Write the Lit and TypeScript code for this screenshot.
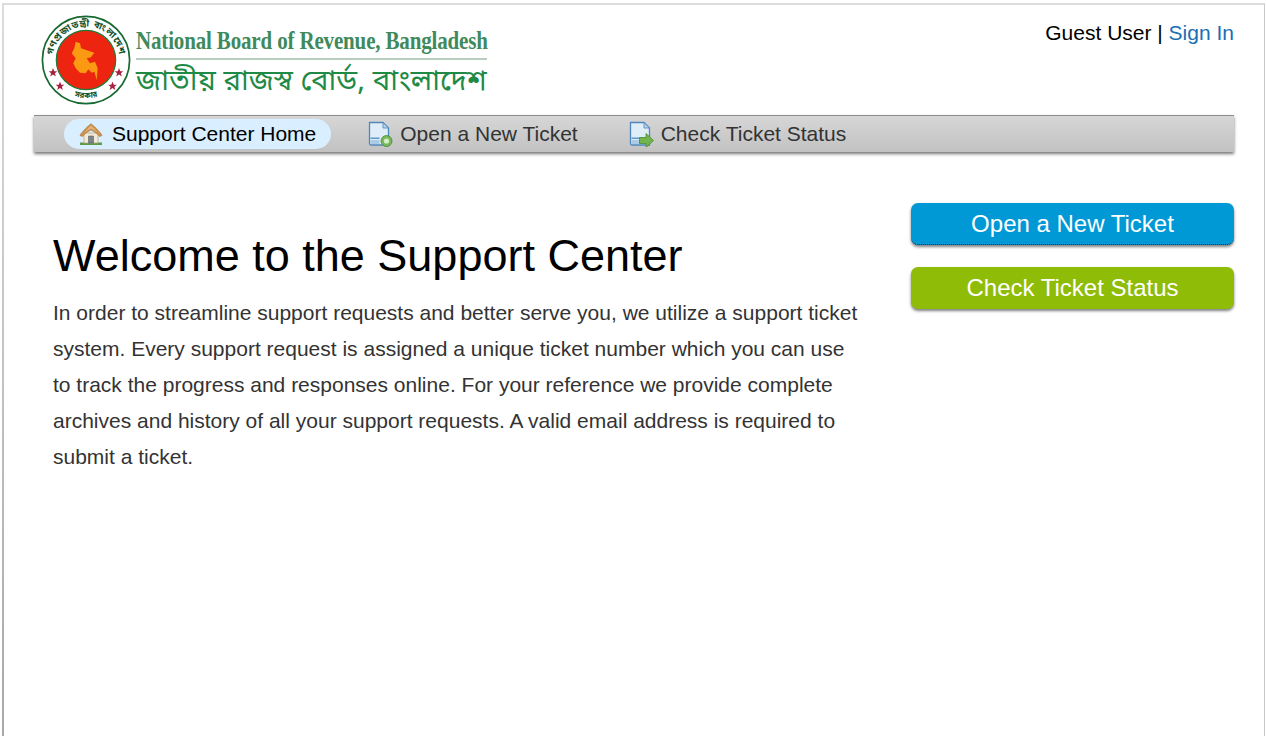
import { LitElement, html, css, svg } from "lit";
import { customElement } from "lit/decorators.js";

const star = (x: number, y: number) =>
  svg`<path transform="translate(${x} ${y})" d="M0-4.400 1.200-1.300 4.300-1.300 1.900.7 2.800 3.900 0 2.100-2.800 3.900-1.900.7-4.300-1.300-1.200-1.300z"/>`;

const seal = svg`<svg class="seal" viewBox="0 0 92 92" width="92" height="92" aria-hidden="true">
  <defs>
    <path id="ringTop" d="M14.700 58 A33.500 33.500 0 1 1 77.300 58"/>
    <path id="ringBottom" d="M18 72 A38.500 38.500 0 0 0 74 72"/>
  </defs>
  <circle cx="46" cy="46" r="43.600" fill="#fff" stroke="#16692f" stroke-width="1.700"/>
  <circle cx="46" cy="46" r="29.700" fill="#ec2410" stroke="#1f7a3a" stroke-width="1.200"/>
  <text class="ring" fill="#14522a"><textPath href="#ringTop" startOffset="50%" text-anchor="middle">গণপ্রজাতন্ত্রী বাংলাদেশ</textPath></text>
  <text class="ring low" fill="#14522a"><textPath href="#ringBottom" startOffset="50%" text-anchor="middle">সরকার</textPath></text>
  <path fill="#fb9a12" d="M35.700 27.700L40 29.300L41 34.300L48.300 36.700L54.300 38.700L51 43.300L46.700 44.300L50 49.300L55 47.700L57.700 54.300L56.700 66L54.300 57.700L51.700 58.700L48.300 55.300L45.700 59.300L40 58.700L35.700 54.300L33.300 49.300L35.700 44.300L31.700 39.300L34.300 34.300z"/>
  <g fill="#a8203f">${star(13, 58.5)}${star(20, 72)}${star(79, 58.5)}${star(72.5, 72)}</g>
</svg>`;

const homeIcon = svg`<svg viewBox="0 0 24 22" width="24" height="22" aria-hidden="true">
  <path d="M1 19.500h22V22H1z" fill="#5f9a4c"/>
  <path d="M5 10h14v10H5z" fill="#f2ead8" stroke="#b5a27e" stroke-width=".7"/>
  <path d="M9.500 13h5v7h-5z" fill="#7d8489" stroke="#5d6367" stroke-width=".6"/>
  <path d="M12 .8C9.800 2.300 3 8.500 1 12.500l2.500 1C6 10.500 9.500 8 12 7c2.500 1 6 3.500 8.500 6.500l2.500-1C21 8.500 14.200 2.300 12 .8z" fill="#cf9350" stroke="#a56f35" stroke-width=".6"/>
  <path d="M12 2.800C10 4.500 7.500 7 6 9c2-1.500 4-2.800 6-3.500 2 .7 4 2 6 3.500-1.500-2-4-4.500-6-6.200z" fill="#e6b87c"/>
</svg>`;

const docIcon = (badge: unknown) => svg`<svg viewBox="0 0 25 26" width="25" height="26" aria-hidden="true">
  <path d="M1.500 1.500h13.500l5.500 5.500v17h-17.500a1.500 1.500 0 0 1-1.500-1.500z" fill="#dfedf9" stroke="#4f86bb" stroke-width="1.300"/>
  <path d="M15 1.500v5.500h5.500z" fill="#b9d3ea" stroke="#4f86bb" stroke-width=".8"/>
  <path d="M2.500 16.500h9v1.500h-9z" fill="#5f97cb"/>
  <path d="M2.500 19h9v4h-9z" fill="#a9cbe8"/>
  ${badge}
</svg>`;
const plusBadge = svg`<circle cx="18.500" cy="20" r="5.500" fill="#79b95c" stroke="#3f8a35" stroke-width=".8"/><circle cx="18.500" cy="20" r="2.600" fill="#d5eec5"/>`;
const arrowBadge = svg`<path d="M10.500 16.500h6.500V12.500l7.500 7-7.500 7V22.500H10.500z" fill="#74b44e" stroke="#438b31" stroke-width=".8"/>`;

@customElement("app-root")
export class AppRoot extends LitElement {
  static styles = css`
    :host {
      display: block;
      height: 736px;
      overflow: hidden;
      background: #fff;
      font-family: "Liberation Sans", Arial, sans-serif;
      color: #333;
      padding: 3px 1px 0 2px;
      box-sizing: border-box;
    }
    .frame {
      height: 733px;
      box-sizing: border-box;
      border-top: 2px solid #dcdcdc;
      border-right: 1px solid #c8c8c8;
      padding: 0 30px 0 32px;
      background: linear-gradient(to bottom, #dcdcdc, #a8a8a8) left top / 2px 100% no-repeat;
    }
    header {
      height: 110px;
      display: flex;
      justify-content: space-between;
      align-items: flex-start;
    }
    .logo {
      display: flex;
      align-items: flex-start;
      margin: 9px 0 0 6px;
      gap: 4px;
    }
    .seal { display: block; }
    .ring {
      font: 700 9.500px "Noto Sans Bengali", "Noto Sans", sans-serif;
      letter-spacing: 0.6px;
    }
    .ring.low { font-size: 8px; letter-spacing: 0; }
    .wordmark {
      width: 351px;
      margin-top: 13px;
      white-space: nowrap;
    }
    .en {
      font: 700 26px/28px "Liberation Serif", serif;
      color: #3f8a5d;
      display: block;
      transform: scaleX(0.808);
      transform-origin: left center;
      letter-spacing: -0.2px;
    }
    .rule { height: 2px; background: #b9cdbf; margin-top: 3px; }
    .bn {
      font: 400 29.300px/36px "Noto Sans Bengali", "Noto Sans", sans-serif;
      color: #1f8a45;
      display: block;
      margin-top: 5px;
    }
    .user {
      margin-top: 13px;
      font-size: 21px;
      line-height: 30px;
      color: #000;
    }
    .user a { color: #1a6eb4; text-decoration: none; }
    nav {
      height: 37px;
      box-sizing: border-box;
      display: flex;
      align-items: center;
      padding-left: 30px;
      border-top: 1px solid #8e8e8e;
      background: linear-gradient(to bottom, #d6d6d6, #c2c2c2);
      box-shadow: 0 2px 3px #777;
      font-size: 21px;
    }
    nav a {
      display: flex;
      align-items: center;
      gap: 7px;
      height: 30px;
      color: #333;
      text-decoration: none;
      white-space: nowrap;
    }
    nav a.active {
      background: #d9eefe;
      color: #000;
      border-radius: 15px;
      padding: 0 15px;
      margin-right: 37px;
      gap: 9px;
    }
    nav a.second { margin-right: 51px; }
    main {
      display: flex;
      justify-content: space-between;
      align-items: flex-start;
      padding-top: 51px;
    }
    .copy { width: 829px; padding-left: 19px; box-sizing: border-box; }
    h1 {
      margin: 27px 0 0;
      font-size: 45px;
      line-height: 52px;
      font-weight: 400;
      color: #000;
    }
    p {
      margin: 13px 0 0;
      font-size: 21px;
      line-height: 36px;
      color: #333;
    }
    aside {
      width: 323px;
      display: flex;
      flex-direction: column;
      gap: 22px;
    }
    .btn {
      height: 42px;
      display: flex;
      align-items: center;
      justify-content: center;
      border-radius: 7px;
      color: #fff;
      font-size: 24px;
      text-decoration: none;
      box-shadow: 0 2px 3px rgba(0, 0, 0, 0.5);
    }
    .blue { background: #0099d6; border-bottom: 1px dotted #123; box-sizing: border-box; }
    .green { background: #8fbc07; }
  `;

  render() {
    return html`
      <div class="frame">
        <header>
          <div class="logo">
            ${seal}
            <div class="wordmark">
              <span class="en">National Board of Revenue, Bangladesh</span>
              <div class="rule"></div>
              <span class="bn">জাতীয় রাজস্ব বোর্ড, বাংলাদেশ</span>
            </div>
          </div>
          <div class="user">Guest User | <a href="#">Sign In</a></div>
        </header>
        <nav>
          <a class="active" href="#">${homeIcon}Support Center Home</a>
          <a class="second" href="#">${docIcon(plusBadge)}Open a New Ticket</a>
          <a href="#">${docIcon(arrowBadge)}Check Ticket Status</a>
        </nav>
        <main>
          <div class="copy">
            <h1>Welcome to the Support Center</h1>
            <p>In order to streamline support requests and better serve you, we utilize a support ticket system. Every support request is assigned a unique ticket number which you can use to track the progress and responses online. For your reference we provide complete archives and history of all your support requests. A valid email address is required to submit a ticket.</p>
          </div>
          <aside>
            <a class="btn blue" href="#">Open a New Ticket</a>
            <a class="btn green" href="#">Check Ticket Status</a>
          </aside>
        </main>
      </div>
    `;
  }
}
